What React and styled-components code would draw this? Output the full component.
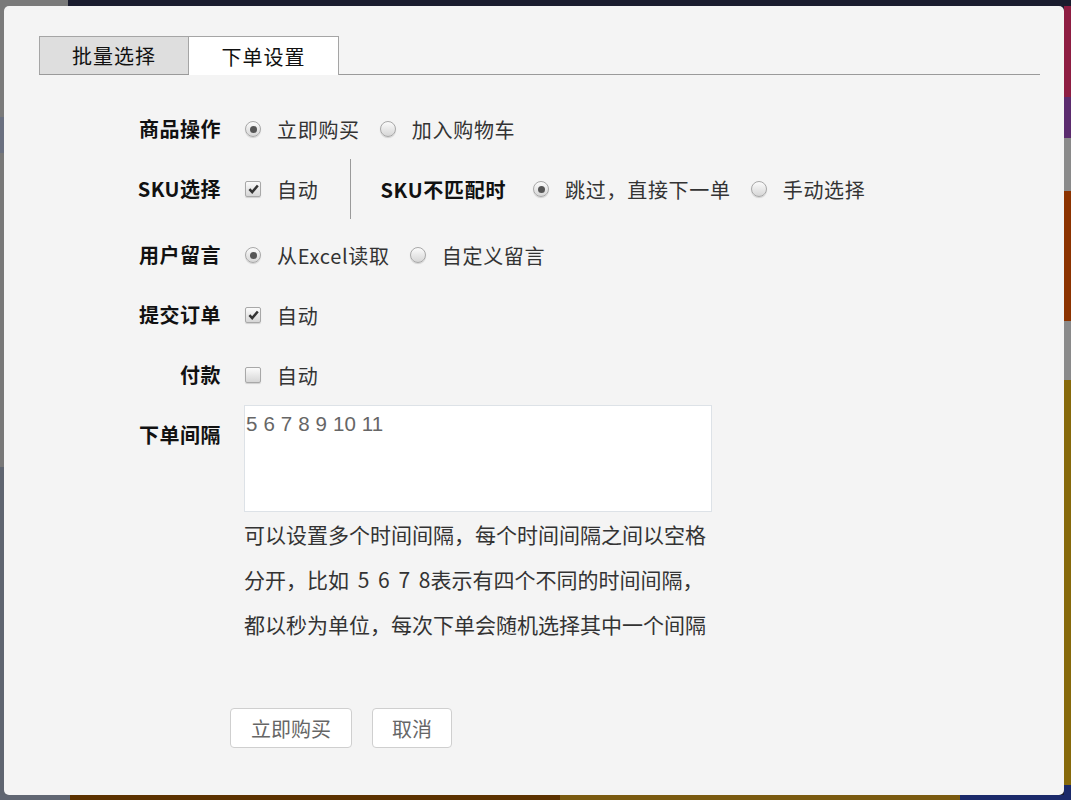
import React from 'react';
import styled, { createGlobalStyle } from 'styled-components';

const GlobalStyle = createGlobalStyle`
  html, body {
    margin: 0;
    padding: 0;
  }
  body {
    font-family: "Noto Sans CJK SC", "Noto Sans", sans-serif;
    color: #333;
  }
`;

const Backdrop = styled.div`
  width: 1071px;
  height: 800px;
  box-sizing: border-box;
  padding: 6px 7px 5px 4px;
  background:
    linear-gradient(to bottom, #1a1c2e 0 6px, #8e1d42 6px 97px, #5b2b6e 97px 138px,
      #8a8a8a 138px 191px, #8c3300 191px 321px, #8a8a8a 321px 380px,
      #86690a 380px 785px, #1b2a6a 785px) right top / 7px 100% no-repeat,
    linear-gradient(to right, #606672 0 70px, #5c3200 70px 560px, #7a5a10 560px 960px,
      #1b2a6a 960px) left bottom / 100% 5px no-repeat,
    linear-gradient(to bottom, #7a7a7a 0 117px, #6a7080 117px 153px, #787878 153px 467px,
      #5f6570 467px) left top / 68px 100% no-repeat,
    #1a1c2e;
`;

const Panel = styled.div`
  height: 100%;
  box-sizing: border-box;
  background: #f4f4f4;
  border-radius: 5px;
  padding: 30px 24px 0 35px;
`;

const TabBar = styled.div`
  display: flex;
  border-bottom: 1px solid #9a9a9a;
`;

const Tab = styled.div`
  width: 150px;
  box-sizing: border-box;
  display: flex;
  align-items: center;
  justify-content: center;
  font-size: 20px;
  color: #111;
  background: ${p => (p.active ? '#fff' : '#dedede')};
  border: 1px solid #a5a5a5;
  border-bottom: none;
  border-left: ${p => (p.active ? 'none' : '1px solid #a5a5a5')};
  margin-bottom: ${p => (p.active ? '-1px' : '0')};
  height: ${p => (p.active ? '39px' : '38px')};
  letter-spacing: 1px;
`;

const Form = styled.div`
  margin-top: 24px;
`;

const Row = styled.div`
  display: flex;
  align-items: flex-start;
  margin-bottom: ${p => p.gap || 0}px;
`;

const Label = styled.div`
  width: 182px;
  margin-right: 23px;
  text-align: right;
  font-weight: 700;
  font-size: 20px;
  line-height: 60px;
  color: #111;
  letter-spacing: 0.5px;
`;

const Controls = styled.div`
  min-height: 60px;
  display: flex;
  align-items: center;
  font-size: 20px;
  letter-spacing: 0.7px;
`;

const Option = styled.label`
  display: flex;
  align-items: center;
  margin-right: 19px;
  color: #333;
  white-space: nowrap;
`;

const Radio = styled.span`
  width: 14px;
  height: 14px;
  border-radius: 50%;
  border: 1px solid #a8a8a8;
  background: linear-gradient(#fbfbfb, #d6d6d6);
  box-shadow: 0 1px 1px rgba(0, 0, 0, 0.15);
  margin: 0 16px 0 1px;
  display: flex;
  align-items: center;
  justify-content: center;

  &::after {
    content: '';
    width: 7px;
    height: 7px;
    border-radius: 50%;
    background: ${p => (p.checked ? '#555' : 'transparent')};
  }
`;

const Box = styled.span`
  width: 14px;
  height: 14px;
  border-radius: 2px;
  border: 1px solid #a8a8a8;
  background: linear-gradient(#fbfbfb, #d6d6d6);
  box-shadow: 0 1px 1px rgba(0, 0, 0, 0.15);
  margin: 0 16px 0 1px;
  display: flex;
  align-items: center;
  justify-content: center;

  svg {
    display: ${p => (p.checked ? 'block' : 'none')};
  }
`;

const Divider = styled.div`
  width: 1px;
  align-self: stretch;
  background: #9a9a9a;
  margin: 0 29px 0 13px;
`;

const SubLabel = styled.span`
  font-weight: 700;
  color: #111;
  margin-right: 26px;
`;

const Column = styled.div`
  display: flex;
  flex-direction: column;
`;

const TextArea = styled.div`
  width: 468px;
  height: 107px;
  box-sizing: border-box;
  background: #fff;
  border: 1px solid #dde2e7;
  padding: 4px 1px;
  font-family: "Liberation Sans", Arial, sans-serif;
  font-size: 20.5px;
  line-height: 27px;
  color: #666;
  word-spacing: 0.3px;
`;

const Help = styled.p`
  margin: 0;
  font-size: 21px;
  line-height: 45px;
  color: #333;
  white-space: pre;
  word-spacing: 4px;
`;

const Actions = styled.div`
  display: flex;
  gap: 20px;
  margin: 61px 0 0 191px;
`;

const Button = styled.button`
  height: 40px;
  width: ${p => p.w}px;
  box-sizing: border-box;
  background: #fff;
  border: 1px solid #cfcfcf;
  border-radius: 4px;
  font-family: "Noto Sans CJK SC", sans-serif;
  font-size: 20px;
  color: #666;
  padding: 0;
`;

const Check = () => (
  <svg width="11" height="10" viewBox="0 0 11 10">
    <path d="M1.4 5.2 L4.2 8.1 L9.8 1.5" fill="none" stroke="#333" strokeWidth="2.5" />
  </svg>
);

const RadioOption = ({ checked, children }) => (
  <Option>
    <Radio checked={checked} />
    {children}
  </Option>
);

const CheckOption = ({ checked, children }) => (
  <Option>
    <Box checked={checked}>
      <Check />
    </Box>
    {children}
  </Option>
);

export default function App() {
  return (
    <>
      <GlobalStyle />
      <Backdrop>
        <Panel>
          <TabBar>
            <Tab>批量选择</Tab>
            <Tab active>下单设置</Tab>
          </TabBar>
          <Form>
            <Row>
              <Label>商品操作</Label>
              <Controls>
                <RadioOption checked>立即购买</RadioOption>
                <RadioOption>加入购物车</RadioOption>
              </Controls>
            </Row>
            <Row gap={6}>
              <Label>SKU选择</Label>
              <Controls>
                <CheckOption checked>自动</CheckOption>
                <Divider />
                <SubLabel>SKU不匹配时</SubLabel>
                <RadioOption checked>跳过，直接下一单</RadioOption>
                <RadioOption>手动选择</RadioOption>
              </Controls>
            </Row>
            <Row>
              <Label>用户留言</Label>
              <Controls>
                <RadioOption checked>从Excel读取</RadioOption>
                <RadioOption>自定义留言</RadioOption>
              </Controls>
            </Row>
            <Row>
              <Label>提交订单</Label>
              <Controls>
                <CheckOption checked>自动</CheckOption>
              </Controls>
            </Row>
            <Row>
              <Label>付款</Label>
              <Controls>
                <CheckOption>自动</CheckOption>
              </Controls>
            </Row>
            <Row>
              <Label>下单间隔</Label>
              <Column>
                <TextArea>5 6 7 8 9 10 11</TextArea>
                <Help>
                  {'可以设置多个时间间隔，每个时间间隔之间以空格\n分开，比如 5 6 7 8表示有四个不同的时间间隔，\n都以秒为单位，每次下单会随机选择其中一个间隔'}
                </Help>
              </Column>
            </Row>
          </Form>
          <Actions>
            <Button w={122}>立即购买</Button>
            <Button w={80}>取消</Button>
          </Actions>
        </Panel>
      </Backdrop>
    </>
  );
}
